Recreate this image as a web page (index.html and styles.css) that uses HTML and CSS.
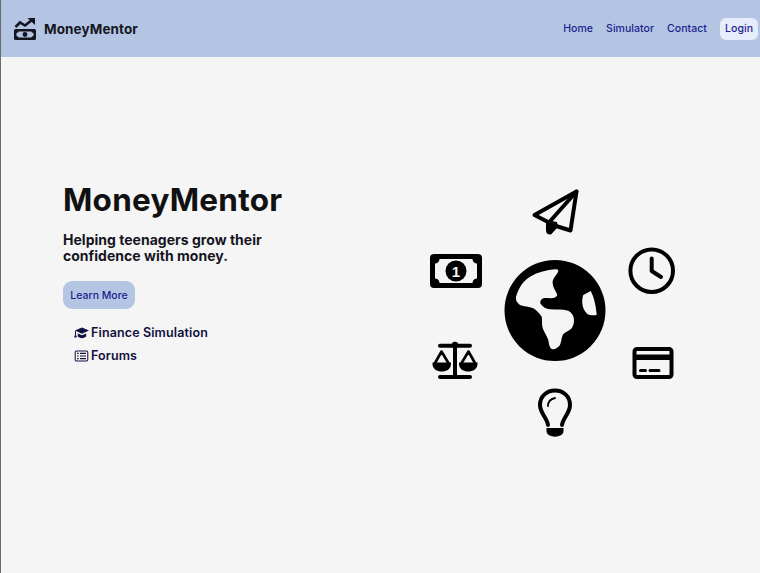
FILE: index.html
```html
<!DOCTYPE html>
<html lang="en">
<head>
<meta charset="utf-8">
<title>MoneyMentor</title>
<link rel="stylesheet" href="styles.css">
</head>
<body>
<header class="topbar">
  <a class="brand" href="#">
    <svg class="brand-icon" viewBox="14 16 22 24" aria-hidden="true">
      <path class="line" d="M15.5 26 L20 21.5 L25 24.5 L32 19"/>
      <path class="solid" d="M27.500 17 H35 V24 Z"/>
      <path class="solid" fill-rule="evenodd" d="M15.5 28 H34.5 Q36 28 36 29.5 V37.5 Q36 39 34.5 39 H15.5 Q14 39 14 37.5 V29.5 Q14 28 15.5 28 Z M18.500 30.500 Q18.500 31.800 16.500 32 V35 Q18.500 35.200 18.500 36.500 H31.500 Q31.500 35.200 33.500 35 V32 Q31.500 31.800 31.500 30.500 Z"/>
      <circle class="solid" cx="25" cy="33.5" r="2.4"/>
    </svg>
    <span class="brand-name">MoneyMentor</span>
  </a>
  <nav class="nav">
    <a href="#">Home</a>
    <a href="#">Simulator</a>
    <a href="#">Contact</a>
    <a class="login" href="#">Login</a>
  </nav>
</header>
<main class="hero">
  <section class="intro">
    <h1>MoneyMentor</h1>
    <p class="tagline">Helping teenagers grow their confidence with money.</p>
    <a class="cta" href="#">Learn More</a>
    <ul class="links">
      <li>
        <svg class="link-icon" viewBox="0 0 16 12" aria-hidden="true">
          <path class="solid" d="M8.500 0 L16 3.400 L8.500 6.800 L1 3.400 Z"/>
          <path class="solid" d="M4 6.400 L8.500 8.300 L13 6.400 V9.600 Q8.500 13.400 4 9.600 Z"/>
          <path class="thin" d="M1.600 4 V8.600"/>
          <circle class="solid" cx="1.600" cy="9.600" r="1.300"/>
        </svg>
        <span>Finance Simulation</span>
      </li>
      <li>
        <svg class="link-icon" viewBox="0 0 16 12" aria-hidden="true">
          <rect class="thin" x="1.300" y="0.700" width="13.400" height="10.600" rx="1.200"/>
          <path class="thin" d="M3.300 3.200 H5 M6.400 3.200 H12.800 M3.300 6 H5 M6.400 6 H12.800 M3.300 8.800 H5 M6.400 8.800 H12.800"/>
        </svg>
        <span>Forums</span>
      </li>
    </ul>
  </section>
  <section class="art">
    <svg class="art-svg" viewBox="420 180 270 270" role="img" aria-label="Money themed icons">
      <!-- paper plane -->
      <path class="outline" d="M576.500 191.500 L534.500 215 L548 222 L550 232 L556 226 L570.500 230.500 Z"/>
      <path class="outline" d="M576.500 191.500 L548.500 223"/>
      <path class="ink" d="M546 220 L557 222 L558 226.500 L551 234.500 Q546 235 546 230 Z"/>

      <!-- bill -->
      <path class="ink" fill-rule="evenodd" d="M434 254 H478 Q482 254 482 258 V284 Q482 288 478 288 H434 Q430 288 430 284 V258 Q430 254 434 254 Z M439.500 259 H472.500 A4.500 4.500 0 0 0 477 263.500 V278.500 A4.500 4.500 0 0 0 472.500 283 H439.500 A4.500 4.500 0 0 0 435 278.500 V263.500 A4.500 4.500 0 0 0 439.500 259 Z"/>
      <circle class="ink" cx="456" cy="271" r="10.500"/>
      <text class="bill-one" x="456" y="276.500">1</text>

      <!-- clock -->
      <circle class="outline" cx="651.700" cy="270.700" r="21.300"/>
      <path class="outline" d="M651.700 258.500 V271 L661 277"/>

      <!-- globe -->
      <circle class="ink" cx="555" cy="310.500" r="50.500"/>
      <path class="paper" d="M516 296.700 C519 287 524 280 530 276.700 C538 272 547 269.800 555 269.300 C558 269 559 270 558 272 C556 276 552 279 552.700 283.300 C553 288 556 291 557.300 295 C556 298 553 298 550 298.300 C547 298 543 297.500 541.700 299.300 C540 301 540 303 540.700 304 C543 307 546 309 550 309.300 C556 310 562 309 568.300 310.700 C572 313 574 316 574 320 C574 324 573 326 571.700 328.300 C569 331 566 332 563.300 334 C561 338 561.500 342 560 345 C558 348 554 350 551.700 349 C549 347 549 343 548.300 340 C547 336 544 332 542.700 328.300 C541.500 324 542.500 320 541.700 316.700 C539 313 537 310.500 533.300 308.300 C529 306.500 524 306.500 520 305 C517 303 515.500 300 516 296.700 Z"/>
      <path class="paper" d="M583.300 295 L590.700 291 C594 297 596 306 596.700 315 C593 315.500 589.500 315.500 587.300 314 C584 311 582.500 307 582.300 303.300 C582 300 582.500 297 583.300 295 Z"/>

      <!-- scales -->
      <path class="line-lg" d="M455 346 V376 M440 345.800 H470 M440 377 H470"/>
      <circle class="ink" cx="455" cy="345" r="3.200"/>
      <path class="line-pan" d="M441.500 351.500 L434.500 364 M441.500 351.500 L449 364 M468.500 351.500 L461 364 M468.500 351.500 L475.500 364"/>
      <path class="ink" d="M432.500 362.500 H451 V364 C451 374 432.500 374 432.500 364 Z M459 362.500 H477.500 V364 C477.500 374 459 374 459 364 Z"/>

      <!-- card -->
      <rect class="outline" x="634.500" y="349" width="37" height="28" rx="2.500"/>
      <rect class="ink" x="634" y="354.500" width="38" height="5.500"/>
      <path class="line-md" d="M640.500 370.500 H645.500 M650 370.500 H659"/>

      <!-- bulb -->
      <path class="outline" d="M548 425 C547 418 540 413 540 405 C540 396 547 390.500 555 390.500 C563 390.500 570 396 570 405 C570 413 563 418 562 425"/>
      <path class="thin-art" d="M548 406 C548 401 550.500 399 555 398"/>
      <path class="ink" d="M546.500 428 H563.500 V431 C563.500 438.500 546.500 438.500 546.500 431 Z"/>
    </svg>
  </section>
</main>
</body>
</html>
```
FILE: styles.css
```css
* {
  box-sizing: border-box;
}

html,
body {
  height: 100%;
}

body {
  margin: 0;
  display: flex;
  flex-direction: column;
  background: #f5f5f5;
  border-left: 1px solid #6b6b6b;
  font-family: Inter, "Liberation Sans", sans-serif;
  color: #111;
  overflow: hidden;
}

a {
  text-decoration: none;
}

.topbar {
  flex: 0 0 57px;
  display: flex;
  align-items: center;
  justify-content: space-between;
  padding: 0 2px 0 13px;
  background: #b3c5e3;
}

.brand {
  display: flex;
  align-items: center;
  gap: 8px;
  color: #15151f;
}

.brand-icon {
  width: 22px;
  height: 24px;
}

.brand-name {
  font-size: 13.500px;
  font-weight: 700;
  letter-spacing: 0.1px;
}

.nav {
  display: flex;
  align-items: center;
  gap: 13px;
}

.nav a {
  font-size: 10.500px;
  font-weight: 500;
  color: #1b1f8f;
  letter-spacing: 0.05px;
}

.nav .login {
  padding: 4px 5px;
  line-height: 14px;
  background: #e6ecfb;
  border-radius: 6px;
}

.hero {
  flex: 1;
  display: grid;
  grid-template-columns: 419px 270px;
  align-items: start;
}

.intro {
  padding: 124px 0 0 62px;
}

h1 {
  margin: 0;
  font-size: 31.500px;
  line-height: 37px;
  font-weight: 700;
  color: #111;
  letter-spacing: 0.25px;
}

.tagline {
  margin: 14px 0 0;
  width: 225px;
  font-size: 14px;
  line-height: 16px;
  font-weight: 700;
  color: #15151f;
  letter-spacing: 0.02px;
}

.cta {
  display: block;
  width: 72px;
  margin-top: 17px;
  padding: 8px 0 6px;
  text-align: center;
  font-size: 10.500px;
  line-height: 14px;
  font-weight: 500;
  color: #1b1f8f;
  background: #b3c5e3;
  border-radius: 9px;
}

.links {
  margin: 12px 0 0;
  padding: 0 0 0 11px;
  list-style: none;
  color: #101040;
}

.links li {
  display: flex;
  align-items: center;
  gap: 2px;
  height: 23px;
  font-size: 12.500px;
  font-weight: 600;
  letter-spacing: 0.13px;
}

.link-icon {
  width: 15px;
  height: 12px;
}

.art {
  padding-top: 123px;
}

.art-svg {
  display: block;
  width: 270px;
  height: 270px;
}

.solid {
  fill: currentColor;
}

.line {
  fill: none;
  stroke: currentColor;
  stroke-width: 2.600;
}

.thin {
  fill: none;
  stroke: currentColor;
  stroke-width: 1.100;
}

.ink {
  fill: #000;
}

.paper {
  fill: #f5f5f5;
}

.outline {
  fill: none;
  stroke: #000;
  stroke-width: 4;
  stroke-linejoin: round;
  stroke-linecap: round;
}

.line-lg {
  fill: none;
  stroke: #000;
  stroke-width: 4;
  stroke-linecap: round;
}

.line-md {
  fill: none;
  stroke: #000;
  stroke-width: 3;
  stroke-linecap: round;
}

.line-pan {
  fill: none;
  stroke: #000;
  stroke-width: 2.600;
  stroke-linecap: round;
}

.thin-art {
  fill: none;
  stroke: #000;
  stroke-width: 1.800;
  stroke-linecap: round;
}

.bill-one {
  fill: #f5f5f5;
  font-family: "Liberation Sans", sans-serif;
  font-size: 15px;
  font-weight: 700;
  text-anchor: middle;
}
```
